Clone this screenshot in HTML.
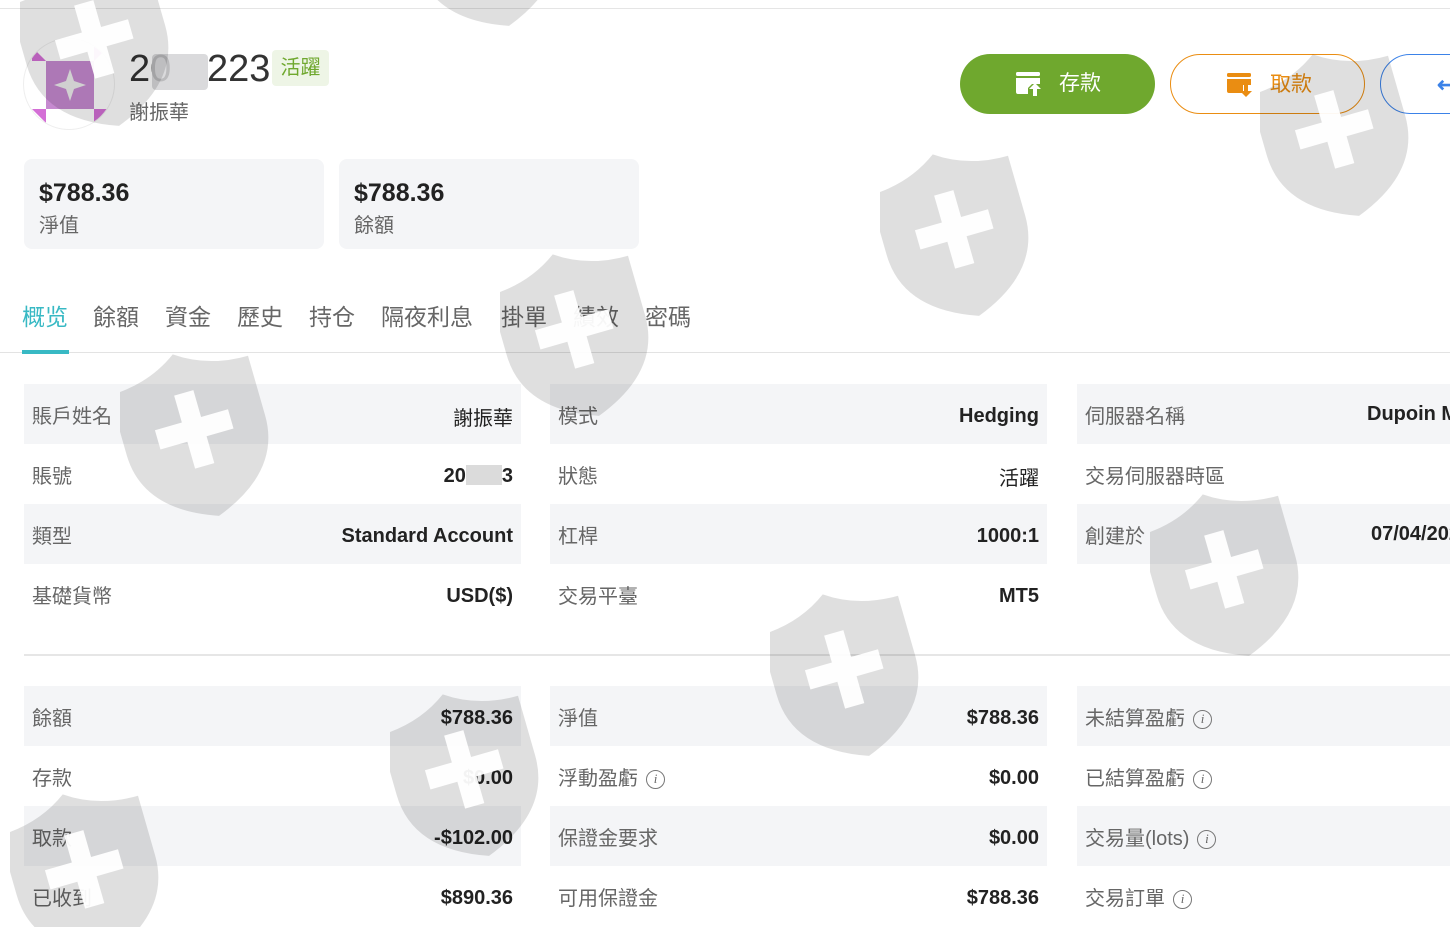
<!DOCTYPE html>
<html><head><meta charset="utf-8">
<style>
*{box-sizing:border-box;margin:0;padding:0}
html,body{width:1450px;height:927px;overflow:hidden}
body{background:#fff;font-family:"Liberation Sans","Noto Sans CJK TC",sans-serif;color:#333}
#root{position:relative;width:1450px;height:927px;overflow:hidden}
.topline{position:absolute;left:0;right:0;top:8px;height:1px;background:#e5e5e5}
.avatar{position:absolute;left:23px;top:38px;width:92px;height:92px;border-radius:50%;border:1px solid #eee;overflow:hidden}
.acct{position:absolute;top:46px;font-size:38px;color:#333;line-height:46px}
.blur{position:absolute;left:152px;top:54px;width:56px;height:36px;background:#d4d4d6;border-radius:4px;opacity:.85}
.tag{position:absolute;left:272px;top:50px;width:57px;height:36px;background:#eef5e6;border-radius:4px;color:#6fa82e;font-size:20px;line-height:36px;text-align:center}
.name{position:absolute;left:129px;top:96px;font-size:20px;color:#666}
.btn{position:absolute;top:54px;height:60px;border-radius:30px;font-size:21px;line-height:60px}
.card{position:absolute;top:159px;width:300px;height:90px;background:#f4f5f7;border-radius:8px;padding:17px 15px}
.card .v{font-size:25px;color:#222;font-weight:600;line-height:34px}
.card .l{font-size:20px;color:#666;line-height:32px}
.tab{position:absolute;top:302px;font-size:23px;color:#666;white-space:nowrap;line-height:30px}
.tabline{position:absolute;left:0;right:0;top:352px;height:1px;background:#e3e3e3}
.tabact{position:absolute;left:22px;top:350px;width:47px;height:4px;background:#38b9c4}
.col{position:absolute;width:497px}
.row{height:60px;display:flex;justify-content:space-between;align-items:center;padding:0 8px;font-size:20px;position:relative}
.row:nth-child(odd){background:#f4f5f7}
.row .k{color:#666}
.row .val{color:#222;font-weight:600;position:relative;top:2px}
.row .abs{position:absolute;top:19px;white-space:nowrap}
.i{display:inline-block;width:19px;height:19px;border:1.5px solid #777;border-radius:50%;font-size:13px;line-height:16px;text-align:center;font-style:italic;color:#666;margin-left:8px;vertical-align:2px;font-family:"Liberation Serif",serif}
.div{position:absolute;left:24px;right:0;top:654px;height:2px;background:#e6e6e6}
.wm{position:absolute;width:160px;height:170px}
</style></head><body><div id="root">
<div class="topline"></div>
<div class="avatar"><svg width="92" height="92" viewBox="0 0 92 92"><g fill="#d46fd6"><rect x="22" y="22" width="48" height="48" fill="#c68ad0"/><polygon points="8,8 22,22 8,22"/><polygon points="70,8 84,8 70,22"/><polygon points="8,70 22,70 22,84"/><polygon points="70,70 84,70 70,84"/></g><polygon points="46,30 50,42 62,46 50,50 46,62 42,50 30,46 42,42" fill="#eee"/></svg></div>
<div class="acct" style="left:129px">20</div>
<div class="acct" style="left:207px">223</div>
<div class="blur"></div>
<div class="tag">活躍</div>
<div class="name">謝振華</div>
<div class="btn" style="left:960px;width:195px;background:#6fa82e;color:#fff">
<svg style="position:absolute;left:55px;top:17px" width="28" height="26" viewBox="0 0 28 26"><rect x="1" y="1" width="24" height="4" rx="1.5" fill="#fff"/><path d="M1 7h24v6h-8l-4 4v6H3a2 2 0 0 1-2-2z" fill="#fff"/><path d="M20 12l6 6h-4v7h-4v-7h-4z" fill="#fff"/></svg>
<span style="position:absolute;left:99px">存款</span></div>
<div class="btn" style="left:1170px;width:195px;border:1px solid #ea8d12;color:#ea8d12">
<svg style="position:absolute;left:55px;top:17px" width="28" height="26" viewBox="0 0 28 26"><rect x="1" y="1" width="24" height="4" rx="1.5" fill="#ea8d12"/><path d="M1 7h24v6h-8v8H3a2 2 0 0 1-2-2z" fill="#ea8d12"/><path d="M20 25l6-6h-4v-7h-4v7h-4z" fill="#ea8d12"/></svg>
<span style="position:absolute;left:99px">取款</span></div>
<div class="btn" style="left:1380px;width:195px;border:1px solid #3b82e8"><span style="position:absolute;left:56px;top:0;color:#3b82e8;font-size:22px;font-weight:bold">↩</span></div>
<div class="card" style="left:24px"><div class="v">$788.36</div><div class="l">淨值</div></div>
<div class="card" style="left:339px"><div class="v">$788.36</div><div class="l">餘額</div></div>
<div class="tab" style="left:22px;color:#38b9c4">概览</div>
<div class="tab" style="left:93px">餘額</div>
<div class="tab" style="left:165px">資金</div>
<div class="tab" style="left:237px">歷史</div>
<div class="tab" style="left:309px">持仓</div>
<div class="tab" style="left:381px">隔夜利息</div>
<div class="tab" style="left:501px">掛單</div>
<div class="tab" style="left:573px">績效</div>
<div class="tab" style="left:645px">密碼</div>
<div class="tabline"></div><div class="tabact"></div>

<div class="col" style="left:24px;top:384px">
<div class="row"><span class="k">賬戶姓名</span><span class="val" style="font-weight:400">謝振華</span></div>
<div class="row"><span class="k">賬號</span><span class="val">20<span style="display:inline-block;width:36px;height:20px;background:#ccc;vertical-align:-3px;opacity:.7"></span>3</span></div>
<div class="row"><span class="k">類型</span><span class="val">Standard Account</span></div>
<div class="row"><span class="k">基礎貨幣</span><span class="val">USD($)</span></div>
</div>
<div class="col" style="left:550px;top:384px">
<div class="row"><span class="k">模式</span><span class="val">Hedging</span></div>
<div class="row"><span class="k">狀態</span><span class="val" style="font-weight:400">活躍</span></div>
<div class="row"><span class="k">杠桿</span><span class="val">1000:1</span></div>
<div class="row"><span class="k">交易平臺</span><span class="val">MT5</span></div>
</div>
<div class="col" style="left:1077px;top:384px">
<div class="row"><span class="k">伺服器名稱</span><span class="val abs" style="left:290px">Dupoin Markets</span></div>
<div class="row" style="background:#fff"><span class="k">交易伺服器時區</span></div>
<div class="row" style="background:#f4f5f7"><span class="k">創建於</span><span class="val abs" style="left:294px">07/04/2024</span></div>
</div>
<div class="div"></div>
<div class="col" style="left:24px;top:686px">
<div class="row"><span class="k">餘額</span><span class="val">$788.36</span></div>
<div class="row"><span class="k">存款</span><span class="val">$0.00</span></div>
<div class="row"><span class="k">取款</span><span class="val">-$102.00</span></div>
<div class="row"><span class="k">已收到</span><span class="val">$890.36</span></div>
</div>
<div class="col" style="left:550px;top:686px">
<div class="row"><span class="k">淨值</span><span class="val">$788.36</span></div>
<div class="row"><span class="k">浮動盈虧<span class="i">i</span></span><span class="val">$0.00</span></div>
<div class="row"><span class="k">保證金要求</span><span class="val">$0.00</span></div>
<div class="row"><span class="k">可用保證金</span><span class="val">$788.36</span></div>
</div>
<div class="col" style="left:1077px;top:686px">
<div class="row"><span class="k">未結算盈虧<span class="i">i</span></span></div>
<div class="row"><span class="k">已結算盈虧<span class="i">i</span></span></div>
<div class="row"><span class="k">交易量(lots)<span class="i">i</span></span></div>
<div class="row"><span class="k">交易訂單<span class="i">i</span></span></div>
</div>

<svg width="0" height="0" style="position:absolute"><defs><g id="sh"><path d="M4 22Q45 22 76 0Q107 22 148 22L148 84Q148 142 76 168Q4 142 4 84Z" fill="rgba(0,0,0,0.125)"/><path d="M66 40h20v28h28v20h-28v28h-20v-28h-28v-20h28z" fill="rgba(255,255,255,0.95)"/></g></defs></svg>
<svg class="wm" style="left:880px;top:150px" viewBox="0 0 160 170"><use href="#sh" transform="rotate(-16 80 85)"/></svg>
<svg class="wm" style="left:500px;top:250px" viewBox="0 0 160 170"><use href="#sh" transform="rotate(-16 80 85)"/></svg>
<svg class="wm" style="left:120px;top:350px" viewBox="0 0 160 170"><use href="#sh" transform="rotate(-16 80 85)"/></svg>
<svg class="wm" style="left:1260px;top:50px" viewBox="0 0 160 170"><use href="#sh" transform="rotate(-16 80 85)"/></svg>
<svg class="wm" style="left:1150px;top:490px" viewBox="0 0 160 170"><use href="#sh" transform="rotate(-16 80 85)"/></svg>
<svg class="wm" style="left:770px;top:590px" viewBox="0 0 160 170"><use href="#sh" transform="rotate(-16 80 85)"/></svg>
<svg class="wm" style="left:390px;top:690px" viewBox="0 0 160 170"><use href="#sh" transform="rotate(-16 80 85)"/></svg>
<svg class="wm" style="left:10px;top:790px" viewBox="0 0 160 170"><use href="#sh" transform="rotate(-16 80 85)"/></svg>
<svg class="wm" style="left:20px;top:-40px" viewBox="0 0 160 170"><use href="#sh" transform="rotate(-16 80 85)"/></svg>
<svg class="wm" style="left:410px;top:-140px" viewBox="0 0 160 170"><use href="#sh" transform="rotate(-16 80 85)"/></svg>
</div></body></html>
